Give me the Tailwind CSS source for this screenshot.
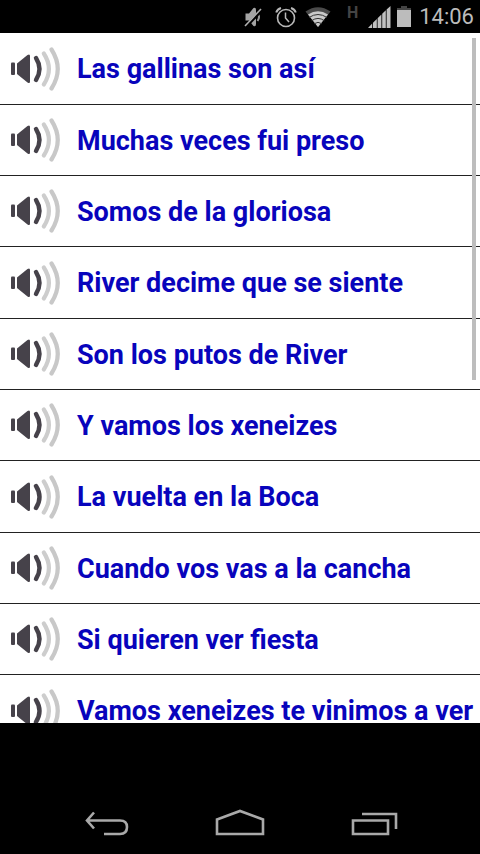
<!DOCTYPE html>
<html lang="es">
<head>
<meta charset="utf-8">
<meta name="viewport" content="width=device-width, initial-scale=1">
<title>Canciones</title>
<script src="https://cdn.jsdelivr.net/npm/@tailwindcss/browser@4"></script>
</head>
<body class="flex h-screen flex-col bg-black font-['Roboto',sans-serif]">
<svg class="hidden" aria-hidden="true">
  <symbol id="speaker" viewBox="0 0 52 44">
    <rect x="1" y="15.500" width="4" height="12.500" rx="1" fill="#46424a"/>
    <path d="M7 16.500 17.500 8Q20 6.500 20 9V34.500Q20 37 17.500 35.500L7 27Z" fill="#46424a"/>
    <g fill="none" stroke-linecap="round">
      <path d="M26 11Q33 22 26 33" stroke="#46424a" stroke-width="4.400"/>
      <path d="M33.800 6.500Q44 22 33.800 37.500" stroke="#cdcdcd" stroke-width="4.200"/>
      <path d="M41.500 2.500Q54 22 41.500 41.500" stroke="#c8c8c8" stroke-width="4.200"/>
    </g>
  </symbol>
</svg>

<header class="flex h-[33px] shrink-0 items-center justify-end pr-[6px] text-[#bcbcbc]">
  <svg class="mr-3 h-6 w-5" viewBox="0 0 20 24" role="img" aria-label="Silencio">
    <path d="M2.500 8.500H6L10.500 3Q13 2 13 5V19Q13 22 10.500 21L6 15.500H2.500Z" fill="#a4a4a4"/>
    <path d="M14.500 8Q17.500 12 14.500 16" fill="none" stroke="#9a9a9a" stroke-width="2"/>
    <path d="M2.800 21.800 18.800 4.800" stroke="#000" stroke-width="3.200"/>
    <path d="M2 21 18 4" stroke="#b0b0b0" stroke-width="1.600"/>
  </svg>
  <svg class="mr-2 h-6 w-[22px]" viewBox="0 0 22 24" role="img" aria-label="Alarma" fill="none" stroke="#b8b8b8">
    <circle cx="11" cy="13" r="8.500" stroke-width="1.600"/>
    <path d="M10.500 7.500V13L14 17" stroke-width="1.500"/>
    <path d="M1.200 7.500Q2.500 4 6 3M16 3Q19.500 4 20.800 7.500" stroke-width="2"/>
  </svg>
  <svg class="mr-4 h-6 w-[26px]" viewBox="0 0 26 24" role="img" aria-label="Wi-Fi">
    <path d="M13 22 .500 6.500Q13-2 25.500 6.500Z" fill="#4a4a4a"/>
    <path d="M13 22 3 9.500Q13 3 23 9.500Z" fill="#c8c8c8"/>
    <path d="M4 12.500Q13 6.500 22 12.500M6.500 15.800Q13 11 19.500 15.800M9 18.800Q13 15.800 17 18.800" fill="none" stroke="#333" stroke-width="1"/>
  </svg>
  <span class="mr-[10px] -mt-2 text-base font-bold text-[#444]">H</span>
  <svg class="mr-[6px] h-6 w-[23px]" viewBox="0 0 23 24" role="img" aria-label="Señal" fill="#c0c0c0">
    <path d="M0 23 4.200 18.500V23ZM5 17.800 8.800 14V23H5ZM9.600 13.200 13.400 9.500V23H9.600ZM14.200 8.800 17.800 5.200V23H14.200ZM18.600 4.400 22.500 1V23H18.600Z"/>
  </svg>
  <svg class="mr-2 h-6 w-[14px]" viewBox="0 0 14 24" role="img" aria-label="Batería">
    <path d="M0 3H4V1H10V3H14V6H0Z" fill="#444"/>
    <rect y="5" width="14" height="17" fill="#bcbcbc"/>
  </svg>
  <time class="text-[22px] leading-8">14:06</time>
</header>

<main class="relative min-h-0 flex-1 overflow-hidden bg-white">
  <ul class="text-[27px] font-bold text-[#0804bc]">
    <li class="h-[71px] border-b border-[#222] nth-[3n+1]:h-[72px]"><button type="button" class="flex h-full w-full items-center gap-[15px] pl-[10px] text-left whitespace-nowrap"><svg class="h-11 w-[52px] shrink-0" aria-hidden="true"><use href="#speaker"/></svg><span class="pt-[2px]">Las gallinas son así</span></button></li>
    <li class="h-[71px] border-b border-[#222] nth-[3n+1]:h-[72px]"><button type="button" class="flex h-full w-full items-center gap-[15px] pl-[10px] text-left whitespace-nowrap"><svg class="h-11 w-[52px] shrink-0" aria-hidden="true"><use href="#speaker"/></svg><span class="pt-[2px]">Muchas veces fui preso</span></button></li>
    <li class="h-[71px] border-b border-[#222] nth-[3n+1]:h-[72px]"><button type="button" class="flex h-full w-full items-center gap-[15px] pl-[10px] text-left whitespace-nowrap"><svg class="h-11 w-[52px] shrink-0" aria-hidden="true"><use href="#speaker"/></svg><span class="pt-[2px]">Somos de la gloriosa</span></button></li>
    <li class="h-[71px] border-b border-[#222] nth-[3n+1]:h-[72px]"><button type="button" class="flex h-full w-full items-center gap-[15px] pl-[10px] text-left whitespace-nowrap"><svg class="h-11 w-[52px] shrink-0" aria-hidden="true"><use href="#speaker"/></svg><span class="pt-[2px]">River decime que se siente</span></button></li>
    <li class="h-[71px] border-b border-[#222] nth-[3n+1]:h-[72px]"><button type="button" class="flex h-full w-full items-center gap-[15px] pl-[10px] text-left whitespace-nowrap"><svg class="h-11 w-[52px] shrink-0" aria-hidden="true"><use href="#speaker"/></svg><span class="pt-[2px]">Son los putos de River</span></button></li>
    <li class="h-[71px] border-b border-[#222] nth-[3n+1]:h-[72px]"><button type="button" class="flex h-full w-full items-center gap-[15px] pl-[10px] text-left whitespace-nowrap"><svg class="h-11 w-[52px] shrink-0" aria-hidden="true"><use href="#speaker"/></svg><span class="pt-[2px]">Y vamos los xeneizes</span></button></li>
    <li class="h-[71px] border-b border-[#222] nth-[3n+1]:h-[72px]"><button type="button" class="flex h-full w-full items-center gap-[15px] pl-[10px] text-left whitespace-nowrap"><svg class="h-11 w-[52px] shrink-0" aria-hidden="true"><use href="#speaker"/></svg><span class="pt-[2px]">La vuelta en la Boca</span></button></li>
    <li class="h-[71px] border-b border-[#222] nth-[3n+1]:h-[72px]"><button type="button" class="flex h-full w-full items-center gap-[15px] pl-[10px] text-left whitespace-nowrap"><svg class="h-11 w-[52px] shrink-0" aria-hidden="true"><use href="#speaker"/></svg><span class="pt-[2px]">Cuando vos vas a la cancha</span></button></li>
    <li class="h-[71px] border-b border-[#222] nth-[3n+1]:h-[72px]"><button type="button" class="flex h-full w-full items-center gap-[15px] pl-[10px] text-left whitespace-nowrap"><svg class="h-11 w-[52px] shrink-0" aria-hidden="true"><use href="#speaker"/></svg><span class="pt-[2px]">Si quieren ver fiesta</span></button></li>
    <li class="h-[71px] border-b border-[#222] nth-[3n+1]:h-[72px]"><button type="button" class="flex h-full w-full items-center gap-[15px] pl-[10px] text-left whitespace-nowrap"><svg class="h-11 w-[52px] shrink-0" aria-hidden="true"><use href="#speaker"/></svg><span class="pt-[2px]">Vamos xeneizes te vinimos a ver</span></button></li>
  </ul>
  <div class="absolute top-[5px] right-1 h-[342px] w-1 bg-[#bdbdbd]"></div>
</main>

<nav class="flex h-[131px] shrink-0 items-end justify-center gap-[84px] pb-[13px]" aria-label="Navegación">
  <button type="button" aria-label="Atrás"><svg class="h-8 w-[50px]" viewBox="0 0 50 32" fill="none" stroke="#a9a9a9" stroke-width="2.600"><path d="M13 3.500 6 11.500 13 19.500M6 11.500H39Q46 11.500 46 18Q46 25 39 25H23"/></svg></button>
  <button type="button" aria-label="Inicio"><svg class="h-8 w-[50px]" viewBox="0 0 50 32" fill="none" stroke="#a9a9a9" stroke-width="2.600"><path d="M2 10.500 25 2 48 10.500V25H2Z"/></svg></button>
  <button type="button" aria-label="Recientes"><svg class="h-8 w-[50px]" viewBox="0 0 50 32" fill="none" stroke="#a9a9a9" stroke-width="2.600"><path d="M4 11.500H39V25H4ZM13 5H47V20"/></svg></button>
</nav>
</body>
</html>
